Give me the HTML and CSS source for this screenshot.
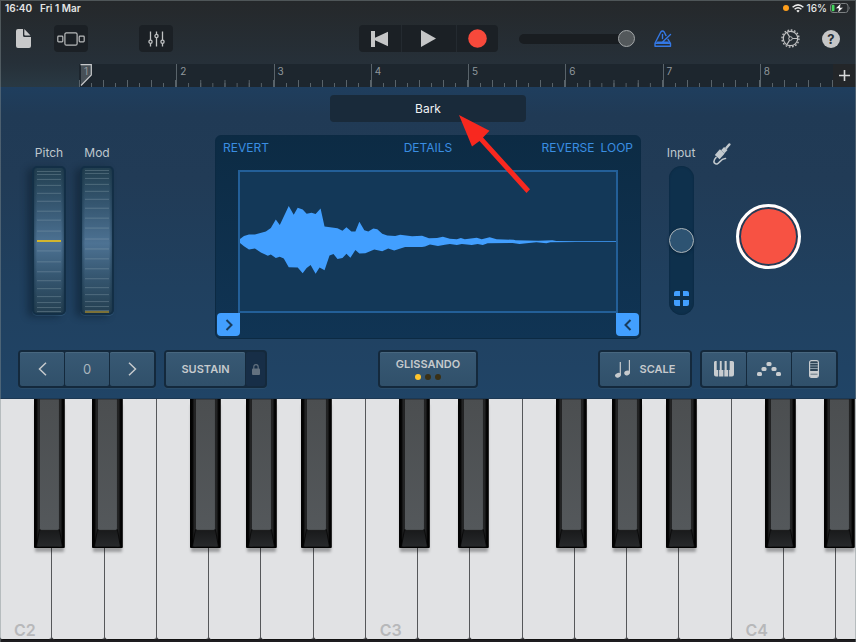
FILE: index.html
```html
<!DOCTYPE html>
<html lang="en">
<head>
<meta charset="utf-8">
<meta name="viewport" content="width=device-width, initial-scale=1">
<title>Sampler</title>
<link rel="stylesheet" href="styles.css">
</head>
<body>
<svg class="defs" aria-hidden="true">
  <defs>
    <linearGradient id="keyTop" x1="0" y1="0" x2="0" y2="1"><stop offset="0" stop-color="#4b4e50"/><stop offset="1" stop-color="#54585b"/></linearGradient>
    <linearGradient id="keySide" x1="0" y1="0" x2="1" y2="0"><stop offset="0" stop-color="#090909"/><stop offset=".1" stop-color="#2b2c2d"/><stop offset=".2" stop-color="#161718"/><stop offset=".8" stop-color="#161718"/><stop offset=".9" stop-color="#2b2c2d"/><stop offset="1" stop-color="#090909"/></linearGradient>
    <linearGradient id="keyFront" x1="0" y1="0" x2="0" y2="1"><stop offset="0" stop-color="#18191a"/><stop offset="1" stop-color="#27292b"/></linearGradient>
    <symbol id="black" viewBox="0 0 31 149" preserveAspectRatio="none">
      <path d="M0 0H31V147Q31 149 29 149H2Q0 149 0 147Z" fill="#020202"/>
      <path d="M2.500 0H28.500V138L27 147H4L2.500 138Z" fill="url(#keySide)"/>
      <path d="M5.500 130H25.500L28.500 147H2.500Z" fill="url(#keyFront)"/>
      <path d="M5.500 130L2.500 147M25.500 130L28.500 147" stroke="#050505" stroke-width=".8"/>
      <path d="M5.500 0H25.500V129Q25.500 131 23.500 131H7.500Q5.500 131 5.500 129Z" fill="url(#keyTop)" stroke="#111" stroke-width=".6"/>
    </symbol>
    <symbol id="ridges-pitch" viewBox="0 0 24 146" preserveAspectRatio="none">
      <path d="M0 3.500H24M0 6.500H24M0 11.500H24M0 17.500H24M0 25.500H24M0 33.500H24M0 43.500H24M0 52.500H24M0 63.500H24M0 83.500H24M0 94.500H24M0 104.500H24M0 113.500H24M0 121.500H24M0 129.500H24M0 135.500H24M0 140.500H24M0 144.500H24" stroke="#9db2bd" stroke-opacity=".32"/>
    </symbol>
    <symbol id="ridges-mod" viewBox="0 0 24 146" preserveAspectRatio="none">
      <path d="M0 2.500H24M0 5.500H24M0 10.500H24M0 16.500H24M0 23.500H24M0 31.500H24M0 40.500H24M0 50.500H24M0 60.500H24M0 71.500H24M0 81.500H24M0 91.500H24M0 101.500H24M0 111.500H24M0 120.500H24M0 127.500H24M0 134.500H24M0 139.500H24M0 143.500H24" stroke="#9db2bd" stroke-opacity=".32"/>
    </symbol>
  </defs>
</svg>

<header class="top">
  <div class="status">
    <time>16:40</time><span class="date">Fri 1 Mar</span>
    <span class="status-right">
      <i class="mic-dot"></i>
      <svg width="12" height="9" viewBox="0 0 12 9" fill="none" stroke="#eee" stroke-width="1.500"><path d="M.6 3.300Q6-1.600 11.400 3.300"/><path d="M2.600 5.200Q6 2.200 9.400 5.200"/><path d="M4.300 6.800Q6 5.400 7.700 6.800L6 8.600Z" fill="#eee" stroke="none"/></svg>
      <span>16%</span>
      <svg width="21" height="10" viewBox="0 0 21 10"><rect x=".5" y=".5" width="17.500" height="9" rx="2.500" fill="none" stroke="#7d8183"/><rect x="1.700" y="1.700" width="2.800" height="6.600" rx="1" fill="#43d65b"/><path d="M19.300 3.300Q20.700 5 19.300 6.700Z" fill="#7d8183"/><path d="M11 0L5.500 5.600H8.700L7.700 10L13.200 4.400H10Z" fill="#fff" stroke="#24282b" stroke-width=".5"/></svg>
    </span>
  </div>

  <nav class="toolbar" aria-label="Song">
    <div class="tools-left">
      <button class="icon-btn" aria-label="My songs"><svg width="15" height="19" viewBox="0 0 15 19" fill="#c8c9ca"><path d="M2 0H7V6.500Q7 8 8.500 8H15V17Q15 19 13 19H2Q0 19 0 17V2Q0 0 2 0Z"/><path d="M8.300 0L14.500 6.600H9.300Q8.300 6.600 8.300 5.600Z"/></svg></button>
      <button class="dark-btn" aria-label="Sound browser"><svg width="28" height="14" viewBox="0 0 28 14" fill="none" stroke="#b9bbbc" stroke-width="1.200"><rect x="7.900" y=".8" width="12.200" height="12.400" rx="1.500"/><rect x=".8" y="4.200" width="5" height="5.600" rx=".8"/><rect x="22.200" y="4.200" width="5" height="5.600" rx=".8"/></svg></button>
      <button class="dark-btn mixer" aria-label="Track controls"><svg width="17" height="16" viewBox="0 0 17 16" fill="none" stroke="#c0c2c3" stroke-width="1.300"><path d="M2.500 .5V9M2.500 12.500V15.500M8.500 .5V3.300M8.500 6.700V15.500M14.500 .5V9M14.500 12.500V15.500"/><circle cx="2.500" cy="10.700" r="1.600"/><circle cx="8.500" cy="5" r="1.600"/><circle cx="14.500" cy="10.700" r="1.600"/></svg></button>
    </div>
    <div class="transport">
      <button aria-label="Go to beginning"><svg width="18" height="16" viewBox="0 0 18 16" fill="#c5c6c7"><path d="M0 0H4V6.800L17 .7V15.300L4 9.200V16H0Z"/></svg></button>
      <button aria-label="Play"><svg width="15" height="17" viewBox="0 0 15 17" fill="#c5c6c7"><path d="M0 0L15 8.500L0 17Z"/></svg></button>
      <button aria-label="Record"><svg width="19" height="19" viewBox="0 0 19 19"><circle cx="9.500" cy="9.500" r="9.300" fill="#f7493b"/></svg></button>
    </div>
    <div class="tools-right">
      <input class="volume" type="range" min="0" max="100" value="100" aria-label="Master volume">
      <button class="icon-btn metronome" aria-label="Metronome"><svg width="18" height="18" viewBox="0 0 18 18" fill="none" stroke="#3478e5" stroke-width="1.400" stroke-linejoin="round" stroke-linecap="round"><path d="M1 13.300L6.800 2Q8.500 0 10.200 2L12 5.600M14 9.300L16.500 13.300M1 13.300V16.300H16.500V13.300ZM3.500 12.300H14M8.500 4.500V8.500M8.500 12L16.500 4.500"/></svg></button>
      <button class="icon-btn gear" aria-label="Settings"><svg width="19" height="19" viewBox="0 0 19 19" fill="none" stroke="#c0c1c2"><circle cx="9.500" cy="9.500" r="8.500" stroke-width="1.400" stroke-dasharray="1.700 1.638"/><circle cx="9.500" cy="9.500" r="7.200" stroke-width="1.200"/><circle cx="9.500" cy="9.500" r="1.800"/><path d="M11.300 9.500H16.500M8.600 7.900L6 3.500M8.600 11.100L6 15.500" stroke-width="1.200"/></svg></button>
      <button class="help" aria-label="Help">?</button>
    </div>
  </nav>

  <div class="ruler">
    <div class="bars">
      <span class="bar first"><svg width="13" height="22" viewBox="0 0 13 22"><path d="M1 .7H11.300V10L1 21Z" fill="#475057"/><path d="M.5 .7H11.300V11L1 21.500" fill="none" stroke="#c7c9cb" stroke-width="1.200"/></svg><b>1</b></span>
      <span class="bar">2</span><span class="bar">3</span><span class="bar">4</span><span class="bar">5</span><span class="bar">6</span><span class="bar">7</span><span class="bar">8</span>
    </div>
    <button class="add" aria-label="Song sections"><svg width="11" height="11" viewBox="0 0 11 11" stroke="#d8d9da" stroke-width="1.600"><path d="M5.500 0V11M0 5.500H11"/></svg></button>
  </div>
</header>

<main class="panel">
  <button class="patch">Bark</button>

  <div class="deck">
    <div class="wheels">
      <div class="wheel">
        <label for="pitch">Pitch</label>
        <div class="wheel-body"><svg aria-hidden="true"><use href="#ridges-pitch"/></svg><input id="pitch" type="range" min="-50" max="50" value="0"></div>
      </div>
      <div class="wheel mod">
        <label for="mod">Mod</label>
        <div class="wheel-body"><svg aria-hidden="true"><use href="#ridges-mod"/></svg><input id="mod" type="range" min="0" max="100" value="0"></div>
      </div>
    </div>

    <section class="sampler" aria-label="Sample">
      <div class="sampler-menu">
        <button>REVERT</button>
        <button>DETAILS</button>
        <span><button>REVERSE</button><button>LOOP</button></span>
      </div>
      <div class="wave">
        <svg viewBox="0 0 378 141" preserveAspectRatio="none" role="img" aria-label="Waveform"><path fill="#429fff" d="M0 68L4 65L9 63.500L15 63.300L26 60.300L31 56.700L36 48.300L40 53.700L49 34.500L54 43.300L58 36.300L63 38L67 42.300L72 41.300L76 42.700L81 37L85 55.300L98 57L103 59.700L107 56L112 60.300H116L120 50.500L125 59L129 60.300L134 57.300L138 58L143 62.700L148 64.300L156 65L161 63.700L173 65.300L183 64.700L190 67.300L198 67L204 65.700L211 67.700L218 68.300L222 67L226 68.300L238 66.700L243 68.300L251 66.300L258 68.300L275 68.700L277 69.300L300 69.700L314 69.300L318 70L339 70.200H378V71.100H339L312 71.300L308 72.300L298 71.300L288 72.300L281 73L274 72L249 72.300L244 74L239 73L233 74L223 73L218 74L211 73L206 73.700L199 75L191 73.500L186 75.500L183 76H166L155 79.700L149 77.700L143 80.300L135 78.700L126 82.300L120 82.700L116 79L111 87L107 83L103 87.300L98 88.300L94 83.300L90 84.700L85 99.700L80 97L76 103.300L71 94.300L67 97.300L63 102.700L58 97L49 96.700L44 87.700L40 86L36 87.300L31 83.700L28 85L21 81.700L15 77.700L9 78.700L4 75.300L0 72Z"/></svg>
      </div>
      <div class="trims">
        <button aria-label="Trim start"><svg width="8" height="12" viewBox="0 0 8 12"><path d="M1.500 1L6.500 6L1.500 11"/></svg></button>
        <button aria-label="Trim end"><svg width="8" height="12" viewBox="0 0 8 12"><path d="M6.500 1L1.500 6L6.500 11"/></svg></button>
      </div>
    </section>

    <div class="recorder">
      <div class="input-level">
        <label for="input">Input</label>
        <div class="level">
          <input id="input" type="range" min="0" max="100" value="50">
          <svg width="15" height="15" viewBox="0 0 15 15" fill="#429fff"><path d="M2 0H6V5H0V2Q0 0 2 0ZM9 0H13Q15 0 15 2V5H9ZM0 9H6V15H2Q0 15 0 13ZM9 9H15V13Q15 15 13 15H9Z"/></svg>
        </div>
      </div>
      <button class="jack" aria-label="Input settings"><svg width="18" height="22" viewBox="0 0 18 22" fill="none" stroke="#c2c9ce" stroke-linecap="round"><path d="M16.300 1.500L13.500 4.700" stroke-width="2.500"/><path d="M12.800 5.400L9.800 8.800" stroke-width="4.600" stroke-linecap="butt"/><path d="M9.300 8.400L4.200 14.200" stroke-width="6.400" stroke-linecap="butt"/><path d="M3 14.500Q-.2 18 1.600 20.200Q4 22.300 6.800 18.800T12.500 15.500" stroke-width="1.600"/></svg></button>
      <button class="sample-record" aria-label="Record sample"></button>
    </div>
  </div>

  <div class="controls">
    <div class="group-left">
      <div class="segmented">
        <button aria-label="Octave down"><svg width="9" height="14" viewBox="0 0 9 14"><path d="M8 .7L1.500 7L8 13.300"/></svg></button>
        <button class="octave">0</button>
        <button aria-label="Octave up"><svg width="9" height="14" viewBox="0 0 9 14"><path d="M1 .7L7.500 7L1 13.300"/></svg></button>
      </div>
      <div class="segmented">
        <button class="sustain">SUSTAIN</button>
        <button class="lock" aria-label="Lock sustain"><svg width="8" height="11" viewBox="0 0 8 11"><path d="M1.800 5V3Q1.800 .7 4 .7T6.200 3V5" fill="none" stroke="#63717f" stroke-width="1.200"/><rect y="4.500" width="8" height="6.500" rx="1" fill="#63717f"/></svg></button>
      </div>
    </div>
    <div class="segmented">
      <button class="glissando"><span>GLISSANDO</span><span class="leds"><i class="on"></i><i></i><i></i></span></button>
    </div>
    <div class="group-right">
      <div class="segmented">
        <button class="scale"><svg width="16" height="18" viewBox="0 0 16 18" fill="#c6cacd"><ellipse cx="2.900" cy="15.300" rx="2.900" ry="2.300" transform="rotate(-20 2.900 15.300)"/><path d="M4.700 2H5.900V15.500H4.700ZM13.800 0H15V13H13.800Z"/><ellipse cx="12.100" cy="13" rx="2.900" ry="2.300" transform="rotate(-20 12.100 13)"/></svg>SCALE</button>
      </div>
      <div class="segmented">
        <button aria-label="Keyboard"><svg width="20" height="16" viewBox="0 0 20 16" fill="#c9cdd0"><path d="M1.200 0H2.700V9H4.200V15.500H2Q0 15.500 0 13.500V1.500Q0 0 1.200 0ZM5.800 0H7.700V9H9.400V15.500H5.100V9H5.800ZM10.600 0H12.700V9H14.200V15.500H10.300V9H10.600ZM15.700 0H18.200Q20 0 20 1.500V13.500Q20 15.500 18 15.500H15.100V9H15.700Z"/></svg></button>
        <button aria-label="Arpeggiator"><svg width="24" height="14" viewBox="0 0 24 14" fill="#c9cdd0"><rect y="10" width="5" height="4" rx="1.500"/><rect x="4.500" y="5" width="5" height="4" rx="1.500"/><rect x="9.500" width="5" height="4" rx="1.500"/><rect x="14.500" y="5" width="5" height="4" rx="1.500"/><rect x="19" y="10" width="5" height="4" rx="1.500"/></svg></button>
        <button aria-label="Controls"><svg width="10" height="18" viewBox="0 0 10 18"><rect x=".6" y=".6" width="8.800" height="16.800" rx="1.800" fill="#2d4456" stroke="#c9cdd0" stroke-width="1.200"/><path d="M1 3.500H9M1 6H9M1 8.500H9" stroke="#899aa7"/><path d="M1 11H9V16Q9 17 8 17H2Q1 17 1 16Z" fill="#c9cdd0"/><path d="M1.500 14.200H8.500" stroke="#647682"/></svg></button>
      </div>
    </div>
  </div>

  <svg class="arrow" width="71" height="78" viewBox="0 0 71 78" aria-hidden="true"><path fill="#f8281f" d="M0 0L30.500 15.800L24 22.600L71 74.300L67.500 78L20.500 26L13 31.600Z"/></svg>
</main>

<section class="keyboard" aria-label="Keyboard">
  <div class="octave-keys">
    <button class="white">C2</button><button class="white" aria-label="D2"></button><button class="white" aria-label="E2"></button><button class="white" aria-label="F2"></button><button class="white" aria-label="G2"></button><button class="white" aria-label="A2"></button><button class="white" aria-label="B2"></button>
    <button class="black cs" aria-label="C sharp 2"><svg><use href="#black"/></svg></button><button class="black ds" aria-label="D sharp 2"><svg><use href="#black"/></svg></button><button class="black fs" aria-label="F sharp 2"><svg><use href="#black"/></svg></button><button class="black gs" aria-label="G sharp 2"><svg><use href="#black"/></svg></button><button class="black as" aria-label="A sharp 2"><svg><use href="#black"/></svg></button>
  </div>
  <div class="octave-keys">
    <button class="white">C3</button><button class="white" aria-label="D3"></button><button class="white" aria-label="E3"></button><button class="white" aria-label="F3"></button><button class="white" aria-label="G3"></button><button class="white" aria-label="A3"></button><button class="white" aria-label="B3"></button>
    <button class="black cs" aria-label="C sharp 3"><svg><use href="#black"/></svg></button><button class="black ds" aria-label="D sharp 3"><svg><use href="#black"/></svg></button><button class="black fs" aria-label="F sharp 3"><svg><use href="#black"/></svg></button><button class="black gs" aria-label="G sharp 3"><svg><use href="#black"/></svg></button><button class="black as" aria-label="A sharp 3"><svg><use href="#black"/></svg></button>
  </div>
  <div class="octave-keys">
    <button class="white">C4</button><button class="white" aria-label="D4"></button><button class="white" aria-label="E4"></button>
    <button class="black cs" aria-label="C sharp 4"><svg><use href="#black"/></svg></button><button class="black ds" aria-label="D sharp 4"><svg><use href="#black"/></svg></button>
  </div>
</section>
</body>
</html>
```
FILE: styles.css
```css
* { box-sizing: border-box; }

body {
  margin: 0;
  min-height: 100vh;
  display: flex;
  flex-direction: column;
  overflow-x: hidden;
  background: #242327;
  color: #bfc7cd;
  font-family: Inter, "Liberation Sans", sans-serif;
  font-size: 12px;
}

/* hairline frame over the whole window */
body::after {
  content: "";
  position: fixed;
  inset: 0;
  border: 1px solid rgba(130, 143, 145, 0.45);
  border-bottom: 0;
  pointer-events: none;
}

button {
  margin: 0;
  padding: 0;
  border: 0;
  background: none;
  color: inherit;
  font: inherit;
  display: flex;
  align-items: center;
  justify-content: center;
}

svg { display: block; }
.defs { position: absolute; width: 0; height: 0; }

input {
  appearance: none;
  -webkit-appearance: none;
  margin: 0;
  background: transparent;
}

/* ---------- header ---------- */
.top { background: linear-gradient(#25282a, #263039 64px, #293943); }

.status {
  display: flex;
  align-items: center;
  height: 16px;
  padding: 0 5px;
  color: #e4e5e5;
  font-size: 10px;
  font-weight: 600;
}
.date { margin-left: 8px; }
.status-right { display: flex; align-items: center; gap: 3px; margin-left: auto; font-weight: 500; }
.mic-dot { width: 6px; height: 6px; border-radius: 50%; background: #ff9f1c; }

.toolbar {
  display: grid;
  grid-template-columns: 1fr auto 1fr;
  padding: 9px 16px 12px;
}
.toolbar > div { display: flex; align-items: center; height: 27px; }
.dark-btn { width: 34px; height: 27px; border-radius: 4px; background: #1b2025; margin-left: 23px; }
.dark-btn.mixer { margin-left: 51px; }
.transport { border-radius: 4px; background: #1b2025; overflow: hidden; }
.transport button { height: 27px; width: 42px; }
.transport button + button { border-left: 1px solid #242a30; }
.transport button:nth-child(2) { width: 55px; }
.tools-right { padding-left: 21px; }
.volume { width: 116px; height: 18px; }
.volume::-webkit-slider-runnable-track { height: 10px; border-radius: 5px; background: #191d21; }
.volume::-webkit-slider-thumb {
  -webkit-appearance: none;
  width: 17px;
  height: 17px;
  margin-top: -4px;
  border: 1px solid #a4a8aa;
  border-radius: 50%;
  background: #53585b;
}
.metronome { margin-left: 19px; }
.gear { margin-left: auto; }
.help {
  width: 18px;
  height: 18px;
  margin-left: 22px;
  border-radius: 50%;
  background: #c5c6c7;
  color: #282f36;
  font-size: 13px;
  font-weight: 700;
}

.ruler { display: flex; height: 23px; padding-left: 79px; }
.bars {
  flex: 1;
  display: grid;
  grid-template-columns: repeat(8, 1fr);
  margin-right: -24px;
  background: #1d262e;
}
.bar {
  padding: 1px 0 0 3px;
  font-size: 10px;
  line-height: 12px;
  color: #8f979c;
  border-left: 1px solid #59636a;
  background:
    linear-gradient(90deg, #59636a 1px, transparent 1px) -1px 100% / 25% 7px repeat-x,
    linear-gradient(90deg, #59636a 1px, transparent 1px) -1px 100% / 12.5% 4px repeat-x;
}
.bar.first { display: grid; padding: 0; border-left-color: transparent; }
.bar.first > * { grid-area: 1 / 1; }
.bar.first b { padding: 1px 0 0 4px; font-weight: 400; }
.add { width: 23px; background: #232629; position: relative; }

/* ---------- instrument panel ---------- */
.panel {
  position: relative;
  padding: 8px 0 10px;
  background: linear-gradient(#1f3e5e, #203a55 28px, #213b56 90px, #20405f 200px, #204466);
  border-bottom: 1px solid #1c3853;
}
.patch {
  width: 23%;
  height: 27px;
  margin: 0 auto 13px;
  border-radius: 4px;
  background: #192a3a;
  color: #f0f2f3;
}

.deck { display: grid; grid-template-columns: 1fr 2fr 1fr; }

.wheels { display: flex; gap: 14px; padding: 9px 0 0 32px; }
.wheel { display: flex; flex-direction: column; align-items: center; gap: 4px; width: 34px; }
.wheel label, .input-level label { line-height: 18px; }
.wheel-body {
  display: grid;
  width: 34px;
  height: 149px;
  border: 2px solid #132f46;
  border-radius: 5px;
  background:
    linear-gradient(90deg, rgba(15, 42, 62, 0.4), transparent 3px, transparent 27px, rgba(15, 42, 62, 0.4)),
    linear-gradient(#223f50, #355670 25%, #4d7293 52%, #355670 75%, #243f51);
  box-shadow: -5px 2px 7px rgba(8, 22, 36, 0.4), 0 1px 0 #31587a;
}
.wheel-body > * { grid-area: 1 / 1; width: 24px; height: 145px; justify-self: center; }
.wheel-body input, .level input { writing-mode: vertical-lr; direction: rtl; }
.wheel-body input::-webkit-slider-thumb {
  -webkit-appearance: none;
  width: 24px;
  height: 2px;
  background: #d1b52e;
}
.mod input::-webkit-slider-thumb { background: #7b7138; }

.sampler {
  margin: 0 1px;
  padding: 1px 1px 2px;
  border: 1px solid #0c2a43;
  border-radius: 6px;
  background: linear-gradient(#0c2b44, #103454);
}
.sampler-menu {
  display: grid;
  grid-template-columns: 1fr auto 1fr;
  padding: 2px 6px;
  height: 33px;
  align-items: start;
  line-height: 18px;
  color: #3a8ee2;
}
.sampler-menu > :first-child { justify-self: start; }
.sampler-menu span { display: flex; justify-content: flex-end; gap: 6px; }
.wave {
  height: 143px;
  margin: 0 21px;
  border: 2px solid #235f98;
  background: #133858;
}
.wave svg { width: 100%; height: 100%; }
.trims { display: flex; justify-content: space-between; }
.trims button { width: 23px; height: 23px; border-radius: 4px; background: #429fff; }
.trims button:first-child { border-top-right-radius: 0; }
.trims button:last-child { border-top-left-radius: 0; }
.trims path { fill: none; stroke: #183c5d; stroke-width: 2; }

.recorder { display: flex; align-items: flex-start; padding: 9px 0 0 24px; }
.input-level { display: flex; flex-direction: column; align-items: center; gap: 4px; width: 30px; }
.level {
  display: grid;
  width: 25px;
  height: 149px;
  border-radius: 13px;
  background: #0e304c;
  box-shadow: inset 0 0 2px #0a243a;
}
.level > * { grid-area: 1 / 1; }
.level input { width: 25px; height: 149px; }
.level svg { align-self: end; justify-self: center; margin-bottom: 9px; }
.level input::-webkit-slider-thumb {
  -webkit-appearance: none;
  width: 25px;
  height: 25px;
  border: 1px solid #abb4b9;
  border-radius: 50%;
  background: #2d5372;
  box-shadow: 0 1px 3px #09233a;
}
.jack { margin: -1px 0 0 17px; }
.sample-record {
  width: 65px;
  height: 65px;
  margin: 60px 0 0 5px;
  border: 3px solid #fff;
  border-radius: 50%;
  background: #f75243;
  box-shadow: inset 0 0 0 2px #213d59;
}

.controls {
  display: grid;
  grid-template-columns: 1fr auto 1fr;
  align-items: center;
  margin-top: 11px;
  padding: 0 18px;
}
.group-left, .group-right { display: flex; gap: 8px; }
.group-right { justify-content: flex-end; }
.segmented {
  display: flex;
  gap: 1px;
  padding: 2px;
  border-radius: 4px;
  background: #14293c;
  box-shadow: 0 1px 0 #2a4c69;
}
.segmented button {
  width: 44px;
  height: 34px;
  border-radius: 2px;
  background: linear-gradient(#385974, #30506a);
  box-shadow: inset 0 1px 0 #48677f;
  color: #c6cacd;
  font-size: 11px;
  font-weight: 600;
}
.segmented .octave { font-size: 13px; font-weight: 400; color: #aab5bd; }
.segmented button[aria-label^="Octave"] path { fill: none; stroke: #c6cacd; stroke-width: 1.5; }
.segmented .sustain { width: 79px; }
.segmented .lock { width: 19px; background: #172e47; box-shadow: none; }
.segmented .glissando { width: 96px; flex-direction: column; gap: 3px; line-height: 13px; }
.leds { display: flex; gap: 4px; }
.leds i { width: 6px; height: 6px; border-radius: 50%; background: #393016; }
.leds .on { background: #ffc52c; }
.segmented .scale { width: 90px; gap: 9px; }

/* annotation pointing at the patch name */
.arrow { position: absolute; top: 28px; left: calc(50% + 31px); }

/* ---------- keyboard ---------- */
.keyboard {
  flex: 1;
  display: flex;
  min-height: 200px;
  overflow: hidden;
  padding-bottom: 2px;
  background: #1e1d20;
}
.octave-keys { position: relative; flex: 0 0 42.73%; display: flex; }
.white {
  flex: 0 0 14.2857%;
  align-items: flex-end;
  justify-content: flex-start;
  padding: 0 0 0 14px;
  border-right: 1px solid #55575a;
  border-bottom: 1px solid #111;
  border-radius: 0 0 3px 3px;
  background: #e1e2e4;
  color: #b7b8ba;
  font-size: 16px;
  font-weight: 600;
  line-height: 18px;
}
.black {
  position: absolute;
  top: 0;
  width: 8.45%;
  height: 62%;
  box-shadow: 0 5px 3px -1px rgba(0, 0, 0, 0.3);
  border-radius: 0 0 2px 2px;
}
.black svg { width: 100%; height: 100%; }
.cs { left: 9.2%; }
.ds { left: 25.2%; }
.fs { left: 52%; }
.gs { left: 67.2%; }
.as { left: 82.2%; }
```
